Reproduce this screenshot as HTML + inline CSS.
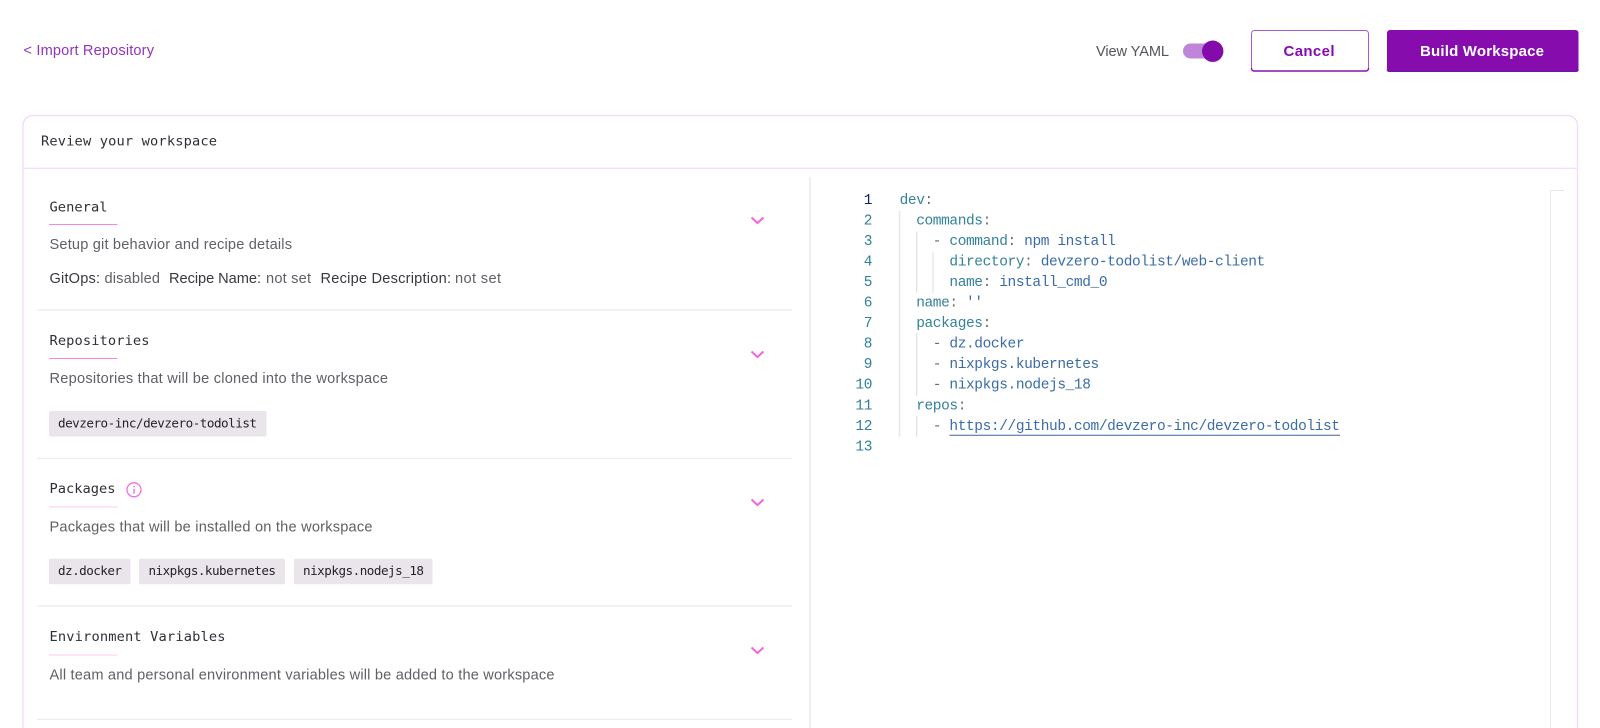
<!DOCTYPE html>
<html lang="en">
<head>
<meta charset="utf-8">
<title>Review your workspace</title>
<style>
html,body{margin:0;padding:0;background:#fff;width:1600px;height:728px;overflow:hidden}
svg{display:block}
.s{font-family:"Liberation Sans",sans-serif;font-size:14.6px}
.b{font-family:"Liberation Sans",sans-serif;font-size:15px;font-weight:700}
.m{font-family:"DejaVu Sans Mono","Liberation Mono",monospace;font-size:13.7px;fill:#2f2f37}
.c{font-family:"DejaVu Sans Mono","Liberation Mono",monospace;font-size:12.6px;fill:#25222b}
.d{fill:#5f5f66}
.k{fill:#38383f}
.e{font-family:"Liberation Mono",monospace;font-size:14.5px;letter-spacing:-.4px}
.ln{fill:#2f8098;text-anchor:end}
.key{fill:#34829a}
.val{fill:#3a6ca8}
.da{fill:#6a6a6a}
.chev{fill:none;stroke:#f564d8;stroke-width:2}
.ig{stroke:#dcdcdc;stroke-width:1}
.div{stroke:#ebe9ed;stroke-width:1.2}
</style>
</head>
<body>
<svg width="1600" height="728" viewBox="0 0 1600 728" xmlns="http://www.w3.org/2000/svg">
<rect width="1600" height="728" fill="#fff"/>

<!-- top bar -->
<text class="s" x="23.5" y="55" fill="#9235bd" textLength="130.5">&lt; Import Repository</text>
<text class="s" x="1096" y="56" fill="#55555c" textLength="73">View YAML</text>
<rect x="1183" y="43.5" width="36" height="15" rx="7.5" fill="#bf85d8"/>
<circle cx="1212.7" cy="51.8" r="10.7" fill="#d9d4dc" opacity=".7"/>
<circle cx="1212.7" cy="51.2" r="10.7" fill="#830bab"/>

<rect x="1251.5" y="30.5" width="117" height="40.5" rx="3" fill="#fff" stroke="#a45bd2" stroke-width="1"/>
<path d="M1251.5 68v.5a2.5 2.5 0 0 0 2.5 2.5h112a2.5 2.5 0 0 0 2.5-2.5V68" fill="none" stroke="#8612b0" stroke-width="1.4"/>
<text class="b" x="1283.5" y="56" fill="#860cad" textLength="51">Cancel</text>

<rect x="1387" y="30" width="191.5" height="41.5" rx="3" fill="#860cae"/>
<path d="M1387 69.500a2.500 2.500 0 0 0 2.500 2h186.500a2.500 2.500 0 0 0 2.500-2" fill="none" stroke="#5f1e9d" stroke-width="1"/>
<text class="b" x="1420" y="56" fill="#fff" textLength="124">Build Workspace</text>

<!-- card -->
<path d="M23 728V125.500a10 10 0 0 1 10-10H1567.500a10 10 0 0 1 10 10V728" fill="none" stroke="#f3dbfd" stroke-width="1.400"/>
<line x1="23" y1="168.300" x2="1577.500" y2="168.300" stroke="#f6e0fd" stroke-width="1.400"/>
<text class="m" x="41" y="145.700" textLength="176">Review your workspace</text>

<!-- split -->
<rect x="809" y="177" width="2" height="551" fill="#f0f0f2"/>

<!-- General -->
<text class="m" x="49.500" y="211.500" textLength="58">General</text>
<line x1="49" y1="224.500" x2="117.500" y2="224.500" stroke="#fb86e2" stroke-width="1"/>
<text class="s d" x="49.500" y="249" textLength="242.500">Setup git behavior and recipe details</text>
<text class="s k" x="49.500" y="283" textLength="50.500">GitOps:</text>
<text class="s d" x="104.500" y="283" textLength="55.500">disabled</text>
<text class="s k" x="169" y="283" textLength="92">Recipe Name:</text>
<text class="s d" x="266" y="283" textLength="45">not set</text>
<text class="s k" x="320.500" y="283" textLength="130.500">Recipe Description:</text>
<text class="s d" x="455" y="283" textLength="46">not set</text>
<path class="chev" d="M751.500 217.500l6 5.500 6-5.500"/>
<line class="div" x1="37" y1="310" x2="792" y2="310"/>

<!-- Repositories -->
<text class="m" x="49.500" y="345" textLength="100">Repositories</text>
<line x1="49" y1="358.500" x2="117.500" y2="358.500" stroke="#fb86e2" stroke-width="1"/>
<text class="s d" x="49.500" y="383" textLength="338.500">Repositories that will be cloned into the workspace</text>
<rect x="49" y="411" width="217.500" height="25.500" rx="2" fill="#e9e5ea"/>
<text class="c" x="58" y="427.500" textLength="199">devzero-inc/devzero-todolist</text>
<path class="chev" d="M751.500 351.500l6 5.500 6-5.500"/>
<line class="div" x1="37" y1="458.300" x2="792" y2="458.300"/>

<!-- Packages -->
<text class="m" x="49.500" y="493" textLength="66">Packages</text>
<circle cx="134" cy="489.800" r="7" fill="none" stroke="#f66fdb" stroke-width="1.300"/>
<rect x="133.300" y="488.800" width="1.400" height="5" fill="#f66fdb"/>
<rect x="133.300" y="485.800" width="1.400" height="1.500" fill="#f66fdb"/>
<line x1="49" y1="507" x2="117.500" y2="507" stroke="#fbc8ee" stroke-width="1"/>
<text class="s d" x="49.500" y="531.500" textLength="323">Packages that will be installed on the workspace</text>
<rect x="49" y="558.700" width="81.500" height="25.600" rx="2" fill="#e9e5ea"/>
<text class="c" x="58" y="575" textLength="64">dz.docker</text>
<rect x="139" y="558.700" width="146" height="25.600" rx="2" fill="#e9e5ea"/>
<text class="c" x="148.500" y="575" textLength="127.500">nixpkgs.kubernetes</text>
<rect x="294" y="558.700" width="138.500" height="25.600" rx="2" fill="#e9e5ea"/>
<text class="c" x="303" y="575" textLength="121">nixpkgs.nodejs_18</text>
<path class="chev" d="M751.500 499.500l6 5.500 6-5.500"/>
<line class="div" x1="37" y1="606" x2="792" y2="606"/>

<!-- Environment Variables -->
<text class="m" x="49.500" y="641" textLength="176">Environment Variables</text>
<line x1="49" y1="655" x2="117.500" y2="655" stroke="#fbc8ee" stroke-width="1"/>
<text class="s d" x="49.500" y="679.300" textLength="505">All team and personal environment variables will be added to the workspace</text>
<path class="chev" d="M751.500 647.500l6 5.500 6-5.500"/>
<line class="div" x1="37" y1="719.300" x2="792" y2="719.300"/>

<!-- minimap edge -->
<path d="M1564 190.500H1550.500V728" fill="none" stroke="#e8e8e8" stroke-width="1"/>

<!-- indent guides -->
<line x1="899.500" y1="211" x2="899.500" y2="436.700" stroke="#e6e6e6" stroke-width="1.500"/>
<line class="ig" x1="916.700" y1="231.700" x2="916.700" y2="292.700"/>
<line class="ig" x1="933" y1="251.700" x2="933" y2="292.700"/>
<line class="ig" x1="916.700" y1="333" x2="916.700" y2="395.700"/>
<line class="ig" x1="916.700" y1="416" x2="916.700" y2="436.700"/>

<!-- line numbers -->
<g class="e" transform="translate(0,-.7)">
<text class="ln" x="872" y="204.500" style="fill:#0b216f">1</text>
<text class="ln" x="872" y="225">2</text>
<text class="ln" x="872" y="245.600">3</text>
<text class="ln" x="872" y="266.100">4</text>
<text class="ln" x="872" y="286.700">5</text>
<text class="ln" x="872" y="307.200">6</text>
<text class="ln" x="872" y="327.800">7</text>
<text class="ln" x="872" y="348.300">8</text>
<text class="ln" x="872" y="368.900">9</text>
<text class="ln" x="872" y="389.400">10</text>
<text class="ln" x="872" y="410">11</text>
<text class="ln" x="872" y="430.500">12</text>
<text class="ln" x="872" y="451.100">13</text>

<!-- code -->
<text class="key" x="899.600" y="204.500">dev<tspan class="da">:</tspan></text>
<text class="key" x="916.200" y="225">commands<tspan class="da">:</tspan></text>
<text x="932.800" y="245.600" xml:space="preserve"><tspan class="da">- </tspan><tspan class="key">command</tspan><tspan class="da">: </tspan><tspan class="val">npm install</tspan></text>
<text x="949.400" y="266.100" xml:space="preserve"><tspan class="key">directory</tspan><tspan class="da">: </tspan><tspan class="val">devzero-todolist/web-client</tspan></text>
<text x="949.400" y="286.700" xml:space="preserve"><tspan class="key">name</tspan><tspan class="da">: </tspan><tspan class="val">install_cmd_0</tspan></text>
<text x="916.200" y="307.200" xml:space="preserve"><tspan class="key">name</tspan><tspan class="da">: </tspan><tspan class="val">''</tspan></text>
<text class="key" x="916.200" y="327.800">packages<tspan class="da">:</tspan></text>
<text x="932.800" y="348.300" xml:space="preserve"><tspan class="da">- </tspan><tspan class="val">dz.docker</tspan></text>
<text x="932.800" y="368.900" xml:space="preserve"><tspan class="da">- </tspan><tspan class="val">nixpkgs.kubernetes</tspan></text>
<text x="932.800" y="389.400" xml:space="preserve"><tspan class="da">- </tspan><tspan class="val">nixpkgs.nodejs_18</tspan></text>
<text class="key" x="916.200" y="410">repos<tspan class="da">:</tspan></text>
<text x="932.800" y="430.500" xml:space="preserve"><tspan class="da">- </tspan><tspan class="val">https://github.com/devzero-inc/devzero-todolist</tspan></text>
</g>
<line x1="949.500" y1="435.300" x2="1340" y2="435.300" stroke="#3d62a0" stroke-width="1"/>
</svg>
</body>
</html>
